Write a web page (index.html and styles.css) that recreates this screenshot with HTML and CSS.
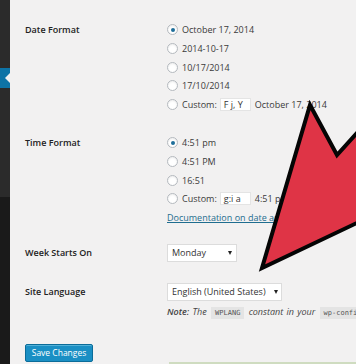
FILE: index.html
```html
<!DOCTYPE html>
<html>
<head>
<meta charset="utf-8">
<link rel="stylesheet" href="styles.css">
</head>
<body>
<div class="sidebar">
  <div class="sb-top"><div class="sb-active"><span class="sb-notch"></span></div></div>
  <div class="sb-bottom"></div>
</div>
<div class="main">
  <div class="row row-date">
    <div class="label">Date Format</div>
    <div class="field">
      <div class="opt"><span class="radio checked"></span><span>October 17, 2014</span></div>
      <div class="opt"><span class="radio"></span><span>2014-10-17</span></div>
      <div class="opt"><span class="radio"></span><span>10/17/2014</span></div>
      <div class="opt"><span class="radio"></span><span>17/10/2014</span></div>
      <div class="opt"><span class="radio"></span><span>Custom:</span><span class="input">F j, Y</span><span>October 17, 2014</span></div>
    </div>
  </div>
  <div class="row row-time">
    <div class="label">Time Format</div>
    <div class="field">
      <div class="opt"><span class="radio checked"></span><span>4:51 pm</span></div>
      <div class="opt"><span class="radio"></span><span>4:51 PM</span></div>
      <div class="opt"><span class="radio"></span><span>16:51</span></div>
      <div class="opt"><span class="radio"></span><span>Custom:</span><span class="input">g:i a</span><span>4:51 pm</span></div>
      <div class="opt"><a class="doc">Documentation on date and time</a></div>
    </div>
  </div>
  <div class="row row-week">
    <div class="label">Week Starts On</div>
    <div class="field">
      <div class="select sel-week"><span>Monday</span><span class="caret"></span></div>
    </div>
  </div>
  <div class="row row-lang">
    <div class="label">Site Language</div>
    <div class="field">
      <div class="select sel-lang"><span>English (United States)</span><span class="caret"></span></div>
      <div class="note"><b>Note:</b> The <code>WPLANG</code> constant in your <code>wp-config</code></div>
    </div>
  </div>
  <div class="actions"><span class="button">Save Changes</span></div>
  <div class="notice"></div>
</div>
<svg class="arrow" width="356" height="364" viewBox="0 0 356 364">
  <polygon points="310,105 337,155 382,105 382,211 262,268" />
</svg>
</body>
</html>
```
FILE: styles.css
```css
html, body {
  margin: 0;
  padding: 0;
}
body {
  width: 356px;
  height: 364px;
  overflow: hidden;
  display: flex;
  position: relative;
  font-family: "Open Sans", "Noto Sans", sans-serif;
  font-size: 9px;
  color: #3a3a3a;
  background: #f2f1f1;
}
.sidebar {
  width: 10px;
  flex: none;
  display: flex;
  flex-direction: column;
}
.sb-top {
  height: 197px;
  background: #2b2b2b;
  padding-top: 68px;
  box-sizing: border-box;
}
.sb-bottom {
  flex: 1;
  background: #1a1a1a;
}
.sb-active {
  height: 20px;
  background: #0d73a6;
  position: relative;
}
.sb-notch {
  position: absolute;
  right: 0;
  top: 5px;
  width: 0;
  height: 0;
  border-top: 5px solid transparent;
  border-bottom: 5px solid transparent;
  border-right: 5px solid #f2f1f1;
}
.main {
  flex: 1;
  padding: 20.7px 0 0 15px;
  display: flex;
  flex-direction: column;
  position: relative;
  min-width: 0;
}
.row {
  display: grid;
  grid-template-columns: 142px 1fr;
}
.label {
  font-weight: 600;
  color: #222;
  height: 18.6px;
  line-height: 18.6px;
  white-space: nowrap;
}
.field {
  min-width: 0;
}
.opt {
  height: 18.6px;
  display: flex;
  align-items: center;
  white-space: nowrap;
  gap: 4px;
}
.radio {
  width: 11px;
  height: 11px;
  box-sizing: border-box;
  border: 1px solid #b4b9be;
  border-radius: 50%;
  background: #fff;
  flex: none;
  position: relative;
  box-shadow: inset 0 1px 2px rgba(0,0,0,0.08);
}
.radio.checked::after {
  content: "";
  position: absolute;
  left: 2.5px;
  top: 2.5px;
  width: 4px;
  height: 4px;
  border-radius: 50%;
  background: #1e6e9a;
}
.input {
  width: 31px;
  height: 13px;
  box-sizing: border-box;
  background: #fff;
  border: 1px solid #e4e4e4;
  padding-left: 3px;
  line-height: 11px;
  color: #333;
  margin-left: -1px;
}
.doc {
  color: #1f6d8f;
  text-decoration: underline;
}
.row-time {
  margin-top: 20px;
}
.row-week {
  margin-top: 17.3px;
}
.row-week .label, .row-lang .label {
  height: 18px;
  line-height: 18px;
}
.row-lang {
  margin-top: 21px;
}
.select {
  height: 18px;
  box-sizing: border-box;
  background: #fff;
  border: 1px solid #dcdcdc;
  display: flex;
  align-items: center;
  padding-left: 4px;
  color: #333;
  white-space: nowrap;
}
.sel-week {
  width: 70px;
  justify-content: space-between;
  padding-right: 4px;
}
.sel-lang {
  width: 115px;
  gap: 8px;
}
.caret {
  width: 0;
  height: 0;
  border-left: 2.5px solid transparent;
  border-right: 2.5px solid transparent;
  border-top: 4px solid #222;
}
.note {
  margin-top: 4px;
  font-style: italic;
  white-space: nowrap;
  color: #444;
  word-spacing: 1px;
}
.note b {
  font-weight: 600;
}
.note code {
  font-family: "DejaVu Sans Mono", monospace;
  font-style: normal;
  font-size: 7px;
  background: #e4e4e4;
  padding: 2px 4px;
  margin: 0 1px;
  color: #555;
  word-spacing: 0;
}
.actions {
  margin-top: 26px;
}
.button {
  display: inline-block;
  width: 68px;
  height: 18px;
  box-sizing: border-box;
  background: #1a8fc4;
  border: 1px solid #0b6c99;
  border-radius: 2px;
  color: #fff;
  font-size: 8.5px;
  text-align: center;
  line-height: 16px;
  box-shadow: inset 0 1px 0 rgba(120,200,230,0.6);
}
.notice {
  position: absolute;
  left: 159px;
  right: 0;
  bottom: 0;
  height: 2px;
  background: #cfdcc0;
}
.arrow {
  position: absolute;
  left: 0;
  top: 0;
  pointer-events: none;
}
.arrow polygon {
  fill: #df3446;
  stroke: #050505;
  stroke-width: 4;
  stroke-linejoin: miter;
}
```
